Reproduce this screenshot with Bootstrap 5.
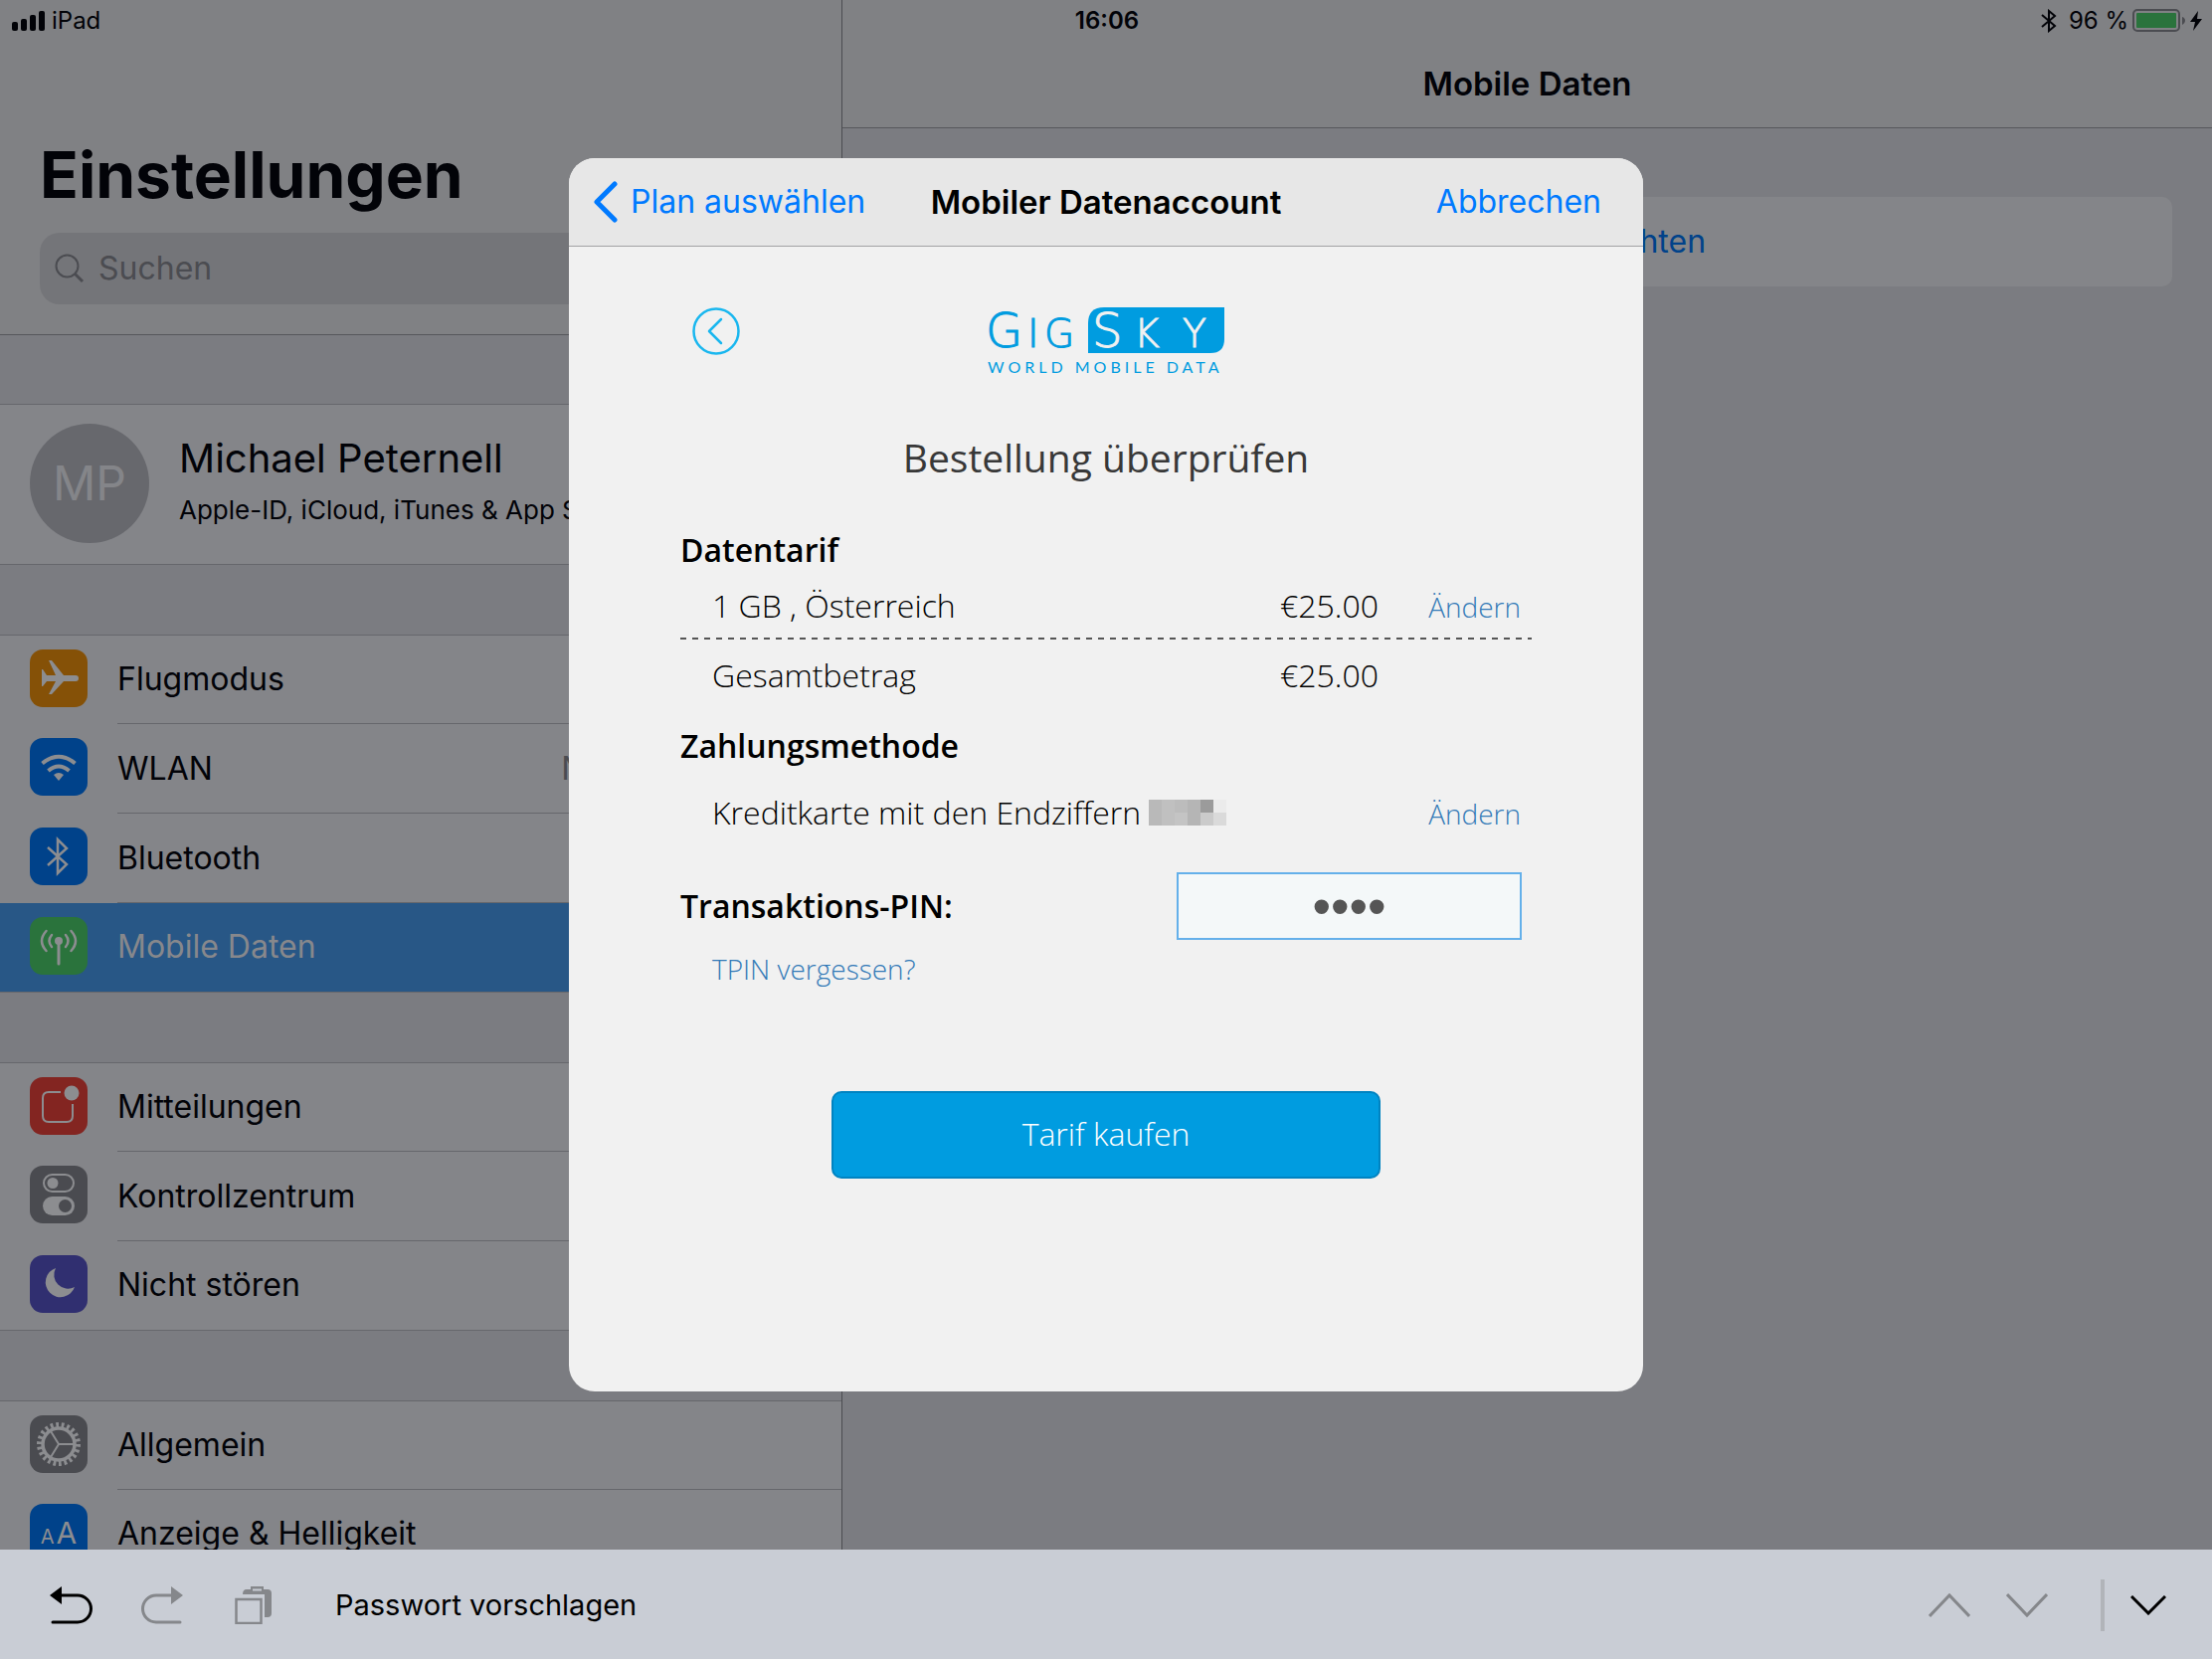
<!DOCTYPE html>
<html lang="de">
<head>
<meta charset="utf-8">
<meta name="viewport" content="width=device-width, initial-scale=1">
<title>Mobile Daten</title>
<link href="https://cdn.jsdelivr.net/npm/bootstrap@5.3.0/dist/css/bootstrap.min.css" rel="stylesheet">
<style>
  :root { --ink:#020308; --bar:#808184; --ground:#7b7c81; --cell:#848589; --line:#66676c; --edge:#56575c; --dimblue:#00428a; --muted:#4b4c51; }
  body { font-family: Inter, "Liberation Sans", sans-serif; font-size: 32px; line-height: 40px; color: var(--ink); background: var(--ground); }
  a { text-decoration: none; }
  svg { display: block; flex: none; }
  .screen { height: 100vh; }
  .statusbar { height: 42px; font-size: 24px; line-height: 42px; padding: 0 10px 0 12px; z-index: 2; }
  .sidebar { width: 847px; flex: none; border-right: 1px solid var(--muted); }
  .side-head { height: 337px; background: var(--bar); border-bottom: 1px solid var(--edge); padding: 136px 40px 0; }
  .side-head h1 { font-size: 64px; line-height: 80px; font-weight: 700; margin: 0 0 18px; }
  .searchbox { height: 72px; border-radius: 20px; background: #747579; color: var(--muted); padding: 0 15px; gap: 12px; }
  .searchbox input { border: 0; background: none; font-size: 32px; color: var(--ink); outline: 0; min-width: 0; }
  .searchbox input::placeholder { color: var(--muted); opacity: 1; }
  .group { margin-top: 70px; background: var(--cell); border-top: 1px solid var(--line); border-bottom: 1px solid var(--line); }
  .side-head + .group { margin-top: 69px; }
  .profile { height: 162px; padding-left: 30px; gap: 30px; color: var(--ink); }
  .avatar { width: 120px; height: 120px; border-radius: 50%; background: #67686d; color: #848589; font-size: 48px; margin-bottom: 2px; }
  .pinfo { padding-bottom: 8px; }
  .pname { font-size: 40px; line-height: 48px; }
  .psub { font-size: 26px; line-height: 32px; margin-top: 12px; }
  .item { height: 90px; margin-top: -1px; padding: 1px 0 0 30px; color: var(--ink); }
  .item + .item { margin-top: 0; padding-top: 0; }
  .item:last-child { height: 89px; }
  .item-text { border-bottom: 1px solid var(--line); margin-left: 30px; padding-right: 30px; }
  .item:last-child .item-text { border-color: transparent; }
  .item.active { background: #285786; color: #87888c; }
  .tile { width: 58px; height: 58px; border-radius: 13px; color: #8c8d90; line-height: 58px; margin-bottom: 4px; }
  .bg-orange { background: #855107; } .bg-bl { background: var(--dimblue); } .bg-gr { background: #2a733c; }
  .bg-rd { background: #832521; } .bg-gy { background: #4a4b50; } .bg-pu { background: #302f70; }
  .pane-head { height: 129px; background: var(--bar); border-bottom: 1px solid var(--edge); padding-top: 64px; }
  .pane-head h2, .sheet-nav h2 { font-size: 33px; line-height: 40px; font-weight: 600; margin: 0; }
  .setup { height: 90px; margin: 69px 40px 0; background: var(--cell); border-radius: 10px; color: var(--dimblue); }
  .overlay { z-index: 3; }
  .sheet { width: 1080px; border-radius: 26px; background: #f1f1f1; color: #000; overflow: hidden; }
  .sheet-nav { height: 89px; background: #e7e7e7; border-bottom: 1px solid #a3a3a4; padding: 0 42px; display: grid; grid-template-columns: 1fr auto 1fr; }
  .sheet-nav a { color: #007aff; }
  .nav-back { margin-left: -17px; gap: 13px; }
  .order { font-family: "Open Sans", Lato, sans-serif; padding: 61px 112px 214px; }
  .brand { display: grid; grid-template-columns: 1fr auto 1fr; height: 68px; padding: 0 12px; }
  .back { width: 48px; height: 48px; border: 0; background: none; padding: 0; }
  .order h3 { font-size: 39px; line-height: 48px; font-weight: 400; color: #383838; margin: 59px 0 49px; text-align: center; }
  .order h4, .order label { font-size: 32px; line-height: 40px; font-weight: 600; margin: 0; }
  .entry { display: grid; grid-template-columns: 1fr auto 154px; align-items: baseline; padding-left: 32px; font-size: 32px; line-height: 40px; font-weight: 300; }
  .entry a, .forgot { color: #337ab7; font-size: 28px; font-weight: 300; }
  .entry a { text-align: right; padding-right: 11px; line-height: 36px; }
  .rule { height: 2px; margin: 12px 0 16px; background: repeating-linear-gradient(90deg, #555 0 6px, transparent 6px 12px); }
  .pin { width: 347px; height: 68px; border: 2px solid #64b0ea; border-radius: 0; background: #f4f8f9; color: #555; text-align: center; font-family: "Liberation Sans", sans-serif; font-size: 53px; line-height: 64px; padding: 0; margin-right: 10px; }
  .buy { width: 552px; height: 88px; border: 2px solid #0083c1; border-radius: 10px; background: #009ce0; color: #fff; font-size: 32px; line-height: 40px; font-weight: 300; padding: 0 0 2px; }
  .keybar { height: 110px; background: #c9cdd5; color: #000; padding: 2px 46px 0 50px; z-index: 4; font-size: 29px; }
  .keybar button { border: 0; background: none; padding: 0; color: inherit; }
  .keybar .off { color: #85878b; }
  .split { width: 4px; height: 52px; background: #b1b4b9; margin: 0 26px 0 53px; }
</style>
</head>
<body>
<div class="screen d-flex flex-column overflow-hidden">
  <div class="position-relative flex-grow-1 d-flex overflow-hidden">
    <div class="statusbar position-absolute top-0 start-0 w-100 d-flex">
      <div class="d-flex align-items-center" style="flex:1 1 0">
        <svg width="34" height="20" fill="currentColor" style="margin-right:6px"><rect x="0" y="11" width="6" height="9" rx="2"/><rect x="9" y="8" width="6" height="12" rx="2"/><rect x="18" y="4" width="6" height="16" rx="2"/><rect x="27" y="0" width="6" height="20" rx="2"/></svg>
        <span>iPad</span>
      </div>
      <div class="fw-semibold">16:06</div>
      <div class="d-flex align-items-center justify-content-end" style="flex:1 1 0">
        <svg width="16" height="24" viewBox="0 0 16 24" fill="none" stroke="currentColor" stroke-width="2"><path d="M1 6l13 11-6 5V2l6 5L1 18"/></svg>
        <span style="margin:0 4px 0 12px">96 %</span>
        <svg width="54" height="24" viewBox="0 0 54 24"><rect x="1" y="1" width="46" height="21" rx="4" fill="none" stroke="#4b4c51" stroke-width="2"/><rect x="4" y="4" width="40" height="15" rx="1" fill="#2a733c"/><path d="M50 8c4 1 4 6 0 8z" fill="#4b4c51"/></svg>
        <svg class="ms-1" width="12" height="20" viewBox="0 0 12 20" fill="currentColor"><path d="M8 0L0 11h5L3 20l9-12H7z"/></svg>
      </div>
    </div>

    <nav class="sidebar d-flex flex-column">
      <div class="side-head flex-shrink-0">
        <h1>Einstellungen</h1>
        <div class="searchbox d-flex align-items-center">
          <svg width="30" height="30" viewBox="0 0 30 30" fill="none" stroke="currentColor" stroke-width="2"><circle cx="12.500" cy="12.500" r="11"/><path d="M20 20l8 8" stroke-width="3"/></svg>
          <input class="flex-grow-1" type="search" placeholder="Suchen" aria-label="Suchen">
        </div>
      </div>
      <a href="#" class="group profile flex-shrink-0 d-flex align-items-center">
        <span class="avatar d-flex align-items-center justify-content-center">MP</span>
        <span class="pinfo d-flex flex-column text-nowrap"><span class="pname">Michael Peternell</span><span class="psub">Apple-ID, iCloud, iTunes &amp; App Store</span></span>
      </a>
      <div class="group flex-shrink-0">
        <a href="#" class="item d-flex align-items-center">
          <span class="tile bg-orange"><svg width="58" height="58" fill="currentColor"><path d="M12 20h1l4 6h9l-7-15h3l12 15h12q3 0 3 3t-3 3H34L22 45h-3l7-13h-9l-4 5h-1z"/></svg></span>
          <span class="item-text flex-grow-1 align-self-stretch d-flex align-items-center">Flugmodus</span>
        </a>
        <a href="#" class="item d-flex align-items-center">
          <span class="tile bg-bl"><svg width="58" height="58" fill="none" stroke="currentColor" stroke-width="4"><path d="M12.500 25.500Q29 12 45.500 25.500M18.500 33Q29 24 39.500 33"/><path d="M24 37q5-4 10 0l-5 6z" fill="currentColor" stroke="none"/></svg></span>
          <span class="item-text flex-grow-1 align-self-stretch d-flex align-items-center justify-content-between">WLAN<span class="text-nowrap" style="color:#4b4c51">Nicht verbunden</span></span>
        </a>
        <a href="#" class="item d-flex align-items-center">
          <span class="tile bg-bl"><svg width="58" height="58" fill="none" stroke="currentColor" stroke-width="2.500"><path d="M18 20l19 17-9 9V12l9 9-19 17"/></svg></span>
          <span class="item-text flex-grow-1 align-self-stretch d-flex align-items-center">Bluetooth</span>
        </a>
        <a href="#" class="item active d-flex align-items-center" aria-current="page">
          <span class="tile bg-gr"><svg width="58" height="58" fill="none" stroke="currentColor" stroke-width="2.500" stroke-linecap="round"><path d="M29 24v23" stroke-width="3"/><circle cx="29" cy="24" r="4" fill="currentColor" stroke="none"/><path d="M22 18q-5 6 0 12M36 18q5 6 0 12M16.500 14q-9 10 0 20M41.500 14q9 10 0 20"/></svg></span>
          <span class="item-text flex-grow-1 align-self-stretch d-flex align-items-center">Mobile Daten</span>
        </a>
      </div>
      <div class="group flex-shrink-0">
        <a href="#" class="item d-flex align-items-center">
          <span class="tile bg-rd"><svg width="58" height="58" fill="none" stroke="currentColor" stroke-width="2"><path d="M31 15H19q-6 0-6 6v18q0 6 6 6h18q6 0 6-6V27"/><circle cx="42" cy="16" r="7.500" fill="currentColor" stroke="none"/></svg></span>
          <span class="item-text flex-grow-1 align-self-stretch d-flex align-items-center">Mitteilungen</span>
        </a>
        <a href="#" class="item d-flex align-items-center">
          <span class="tile bg-gy"><svg width="58" height="58" fill="none" stroke="currentColor" stroke-width="2"><rect x="14" y="9" width="30" height="17" rx="8.500"/><circle cx="23" cy="17.500" r="5.500" fill="currentColor" stroke="none"/><rect x="13" y="31" width="32" height="19" rx="9.500" fill="currentColor" stroke="none"/><circle cx="35.500" cy="40.500" r="6.500" fill="#4a4b50" stroke="none"/></svg></span>
          <span class="item-text flex-grow-1 align-self-stretch d-flex align-items-center">Kontrollzentrum</span>
        </a>
        <a href="#" class="item d-flex align-items-center">
          <span class="tile bg-pu"><svg width="58" height="58" fill="currentColor"><path d="M26 13a15 15 0 1 0 19 19A14 14 0 0 1 26 13z"/></svg></span>
          <span class="item-text flex-grow-1 align-self-stretch d-flex align-items-center">Nicht stören</span>
        </a>
      </div>
      <div class="group flex-shrink-0">
        <a href="#" class="item d-flex align-items-center">
          <span class="tile bg-gy"><svg width="58" height="58" fill="none" stroke="currentColor"><circle cx="29" cy="29" r="16" stroke-width="3.500"/><circle cx="29" cy="29" r="19.500" stroke-width="5" pathLength="44" stroke-dasharray="1 1"/><path d="M29 29h15M29 29l-8-13M29 29l-8 13" stroke-width="2"/></svg></span>
          <span class="item-text flex-grow-1 align-self-stretch d-flex align-items-center">Allgemein</span>
        </a>
        <a href="#" class="item d-flex align-items-center">
          <span class="tile bg-bl d-flex justify-content-center align-items-baseline" style="gap:2px"><span style="font-size:20px">A</span><span style="font-size:30px">A</span></span>
          <span class="item-text flex-grow-1 align-self-stretch d-flex align-items-center">Anzeige &amp; Helligkeit</span>
        </a>
      </div>
    </nav>

    <main class="flex-grow-1">
      <div class="pane-head text-center"><h2>Mobile Daten</h2></div>
      <a href="#" class="setup d-flex align-items-center justify-content-center">Mobile Daten einrichten</a>
    </main>

    <div class="overlay position-absolute top-0 start-0 w-100 h-100 d-flex align-items-center justify-content-center">
      <section class="sheet" role="dialog" aria-labelledby="sheet-title">
        <header class="sheet-nav align-items-center">
          <a href="#" class="nav-back d-flex align-items-center"><svg width="24" height="42" viewBox="0 0 24 42" fill="none" stroke="currentColor" stroke-width="5" stroke-linecap="round" stroke-linejoin="round"><path d="M21 3L3 21l18 18"/></svg>Plan auswählen</a>
          <h2 id="sheet-title">Mobiler Datenaccount</h2>
          <a href="#" class="text-end">Abbrechen</a>
        </header>
        <form class="order" onsubmit="return false">
          <div class="brand">
            <button class="back" type="button" aria-label="Zurück"><svg width="48" height="48" fill="none" stroke="#1ab7ef" stroke-width="2.500"><circle cx="24" cy="24" r="22.500"/><path d="M29 12L17 24l12 12" stroke-linecap="round" stroke-linejoin="round"/></svg></button>
            <svg class="overflow-visible" width="238" height="68" viewBox="0 0 238 68" fill="#009ce0" font-family="DejaVu Sans, sans-serif" font-weight="200">
              <path d="M101 46V16q0-16 16-16h121v32q0 14-14 14z"/>
              <text x="-2" y="40" font-size="48" stroke="#009ce0">G<tspan x="40 57" font-size="39">IG</tspan></text>
              <text x="105" y="40" font-size="48" fill="#f1f1f1" stroke="#f1f1f1">S<tspan x="147 196" font-size="39">KY</tspan></text>
              <text x="0" y="66" font-family="Lato, sans-serif" font-weight="400" font-size="16" letter-spacing="4">WORLD MOBILE DATA</text>
            </svg>
          </div>
          <h3>Bestellung überprüfen</h3>
          <h4>Datentarif</h4>
          <div class="entry mt-3"><span>1 GB , Österreich</span><span>€25.00</span><a href="#">Ändern</a></div>
          <div class="rule"></div>
          <div class="entry"><span>Gesamtbetrag</span><span>€25.00</span></div>
          <h4 style="margin-top:31px">Zahlungsmethode</h4>
          <div class="entry" style="margin-top:27px">
            <span class="d-flex align-items-center text-nowrap">Kreditkarte mit den Endziffern
              <svg class="ms-2" width="78" height="26" shape-rendering="crispEdges"><path fill="#b9b9b9" d="M0 0h13v26H0z"/><path fill="#c0c0c0" d="M13 0h13v26H13z"/><path fill="#bcbcbc" d="M26 0h13v13H26z"/><path fill="#b5b5b5" d="M39 0h13v26H39z"/><path fill="#9b9b9b" d="M52 0h13v13H52z"/><path fill="#ebebeb" d="M65 0h13v13H65z"/><path fill="#c4c4c4" d="M26 13h13v13H26z"/><path fill="#cbcbcb" d="M52 13h13v13H52z"/><path fill="#dadada" d="M65 13h13v13H65z"/></svg>
            </span><span></span><a href="#">Ändern</a>
          </div>
          <div class="d-flex align-items-center justify-content-between" style="margin-top:40px">
            <label for="tpin">Transaktions-PIN:</label>
            <input class="pin" id="tpin" type="password" value="1234">
          </div>
          <div class="d-flex" style="margin-top:9px;padding-left:32px"><a class="forgot" href="#">TPIN vergessen?</a></div>
          <button class="buy d-block mx-auto" style="margin-top:103px" type="submit">Tarif kaufen</button>
        </form>
      </section>
    </div>
  </div>

  <footer class="keybar flex-shrink-0 d-flex align-items-center">
    <button type="button" aria-label="Rückgängig"><svg width="44" height="38" viewBox="0 0 44 38" fill="none" stroke="currentColor" stroke-width="3"><path d="M10 9h18a13 13 0 0 1 0 27H3" stroke-linecap="round"/><path d="M0 9L12 0v18z" fill="currentColor" stroke="none"/></svg></button>
    <button type="button" class="off" style="margin-left:47px" aria-label="Wiederholen"><svg width="44" height="38" viewBox="0 0 44 38" fill="none" stroke="currentColor" stroke-width="3"><path d="M32 9H16a13 13 0 0 0 0 27h24" stroke-linecap="round"/><path d="M43 9L31 0v18z" fill="currentColor" stroke="none"/></svg></button>
    <button type="button" class="off" style="margin-left:51px" aria-label="Einsetzen"><svg width="38" height="38" viewBox="0 0 38 38" fill="none" stroke="currentColor"><rect x="1.500" y="13" width="25" height="24" stroke-width="2.500"/><path d="M8 8q0-5 4-5h4V0h13v3h4q4 0 4 4v20q0 4-4 4h-3V8z" fill="currentColor" stroke="none"/><path d="M18 3.500h9" stroke="#c9cdd5" stroke-width="2"/></svg></button>
    <button type="button" style="margin-left:63px">Passwort vorschlagen</button>
    <div class="ms-auto d-flex align-items-center">
      <button type="button" class="off" aria-label="Vorheriges Feld"><svg width="42" height="26" fill="none" stroke="currentColor" stroke-width="3"><path d="M1 24L21 3l20 21"/></svg></button>
      <button type="button" class="off" style="margin-left:36px" aria-label="Nächstes Feld"><svg width="42" height="26" fill="none" stroke="currentColor" stroke-width="3"><path d="M1 2l20 21L41 2"/></svg></button>
      <span class="split"></span>
      <button type="button" aria-label="Tastatur ausblenden"><svg width="36" height="20" fill="none" stroke="currentColor" stroke-width="3"><path d="M1 1l17 17L35 1"/></svg></button>
    </div>
  </footer>
</div>
<script src="https://cdn.jsdelivr.net/npm/bootstrap@5.3.0/dist/js/bootstrap.bundle.min.js"></script>
</body>
</html>
